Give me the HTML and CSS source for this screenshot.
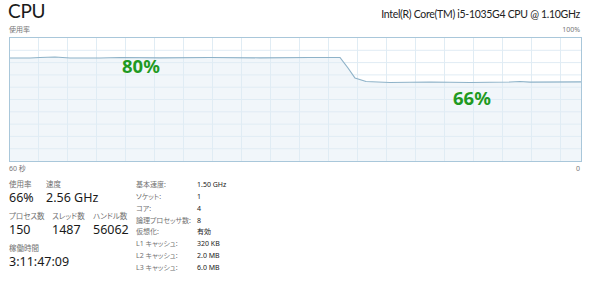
FILE: index.html
```html
<!DOCTYPE html>
<html lang="ja">
<head>
<meta charset="utf-8">
<link rel="stylesheet" href="styles.css">
</head>
<body>
<div class="page">
  <div class="header">
    <div class="title">CPU</div>
    <div class="model">Intel(R) Core(TM) i5-1035G4 CPU @ 1.10GHz</div>
  </div>
  <div class="axis-row">
    <span>使用率</span>
    <span>100%</span>
  </div>
  <div class="chart">
    <svg class="chart-svg" width="571" height="123" viewBox="0 0 571 123">
      <path class="area" d="M0 20 L20 20 L30 19.5 L45 19 L60 20 L90 20 L110 19.5 L150 19.8 L200 19.5 L250 19.8 L300 19.5 L330 19.5 L338 30 L345 40 L356 43.5 L380 44.5 L420 44 L460 44.5 L500 44 L510 43.5 L520 44.2 L571 43.8 L571 123 L0 123 Z"/>
      <g class="grid">
        <line x1="0" y1="12.3" x2="571" y2="12.3"/>
        <line x1="0" y1="24.6" x2="571" y2="24.6"/>
        <line x1="0" y1="36.9" x2="571" y2="36.9"/>
        <line x1="0" y1="49.2" x2="571" y2="49.2"/>
        <line x1="0" y1="61.5" x2="571" y2="61.5"/>
        <line x1="0" y1="73.8" x2="571" y2="73.8"/>
        <line x1="0" y1="86.1" x2="571" y2="86.1"/>
        <line x1="0" y1="98.4" x2="571" y2="98.4"/>
        <line x1="0" y1="110.7" x2="571" y2="110.7"/>
        <line x1="28.5" y1="0" x2="28.5" y2="123"/>
        <line x1="57.5" y1="0" x2="57.5" y2="123"/>
        <line x1="86.5" y1="0" x2="86.5" y2="123"/>
        <line x1="115.5" y1="0" x2="115.5" y2="123"/>
        <line x1="144.5" y1="0" x2="144.5" y2="123"/>
        <line x1="173.5" y1="0" x2="173.5" y2="123"/>
        <line x1="202.5" y1="0" x2="202.5" y2="123"/>
        <line x1="231.5" y1="0" x2="231.5" y2="123"/>
        <line x1="260.5" y1="0" x2="260.5" y2="123"/>
        <line x1="289.5" y1="0" x2="289.5" y2="123"/>
        <line x1="318.5" y1="0" x2="318.5" y2="123"/>
        <line x1="347.5" y1="0" x2="347.5" y2="123"/>
        <line x1="376.5" y1="0" x2="376.5" y2="123"/>
        <line x1="405.5" y1="0" x2="405.5" y2="123"/>
        <line x1="434.5" y1="0" x2="434.5" y2="123"/>
        <line x1="463.5" y1="0" x2="463.5" y2="123"/>
        <line x1="492.5" y1="0" x2="492.5" y2="123"/>
        <line x1="521.5" y1="0" x2="521.5" y2="123"/>
        <line x1="550.5" y1="0" x2="550.5" y2="123"/>
      </g>
      <path class="line" d="M0 20 L20 20 L30 19.5 L45 19 L60 20 L90 20 L110 19.5 L150 19.8 L200 19.5 L250 19.8 L300 19.5 L330 19.5 L338 30 L345 40 L356 43.5 L380 44.5 L420 44 L460 44.5 L500 44 L510 43.5 L520 44.2 L571 43.8"/>
    </svg>
    <span class="callout callout-high">80%</span>
    <span class="callout callout-low">66%</span>
  </div>
  <div class="axis-row axis-bottom">
    <span>60 秒</span>
    <span>0</span>
  </div>
  <div class="stats">
    <div class="stats-left">
      <div class="stat-row">
        <div class="stat stat-usage">
          <div class="stat-label">使用率</div>
          <div class="stat-value">66%</div>
        </div>
        <div class="stat">
          <div class="stat-label">速度</div>
          <div class="stat-value">2.56 GHz</div>
        </div>
      </div>
      <div class="stat-row">
        <div class="stat stat-proc">
          <div class="stat-label">プロセス数</div>
          <div class="stat-value">150</div>
        </div>
        <div class="stat stat-thread">
          <div class="stat-label">スレッド数</div>
          <div class="stat-value">1487</div>
        </div>
        <div class="stat">
          <div class="stat-label">ハンドル数</div>
          <div class="stat-value">56062</div>
        </div>
      </div>
      <div class="stat-row">
        <div class="stat">
          <div class="stat-label">稼働時間</div>
          <div class="stat-value">3:11:47:09</div>
        </div>
      </div>
    </div>
    <dl class="specs">
      <dt>基本速度:</dt><dd>1.50 GHz</dd>
      <dt>ソケット:</dt><dd>1</dd>
      <dt>コア:</dt><dd>4</dd>
      <dt>論理プロセッサ数:</dt><dd>8</dd>
      <dt>仮想化:</dt><dd>有効</dd>
      <dt>L1 キャッシュ:</dt><dd>320 KB</dd>
      <dt>L2 キャッシュ:</dt><dd>2.0 MB</dd>
      <dt>L3 キャッシュ:</dt><dd>6.0 MB</dd>
    </dl>
  </div>
</div>
</body>
</html>
```

FILE: styles.css
```css
* { box-sizing: border-box; }
html, body {
  margin: 0;
  padding: 0;
  background: #ffffff;
}
body {
  font-family: "Noto Sans", "Noto Sans CJK JP", sans-serif;
  color: #1a1a1a;
  width: 589px;
  height: 284px;
  overflow: hidden;
  font-feature-settings: "palt";
}
.page {
  padding: 0 9px 0 8px;
}
.header {
  display: flex;
  justify-content: space-between;
  align-items: baseline;
  height: 25px;
}
.title {
  font-family: "Lato", "Noto Sans", sans-serif;
  font-size: 19px;
  line-height: 22px;
  font-weight: 400;
  letter-spacing: -0.3px;
}
.model {
  font-family: "Lato", "Noto Sans", sans-serif;
  font-size: 10.5px;
  line-height: 14px;
  letter-spacing: -0.3px;
  color: #222;
}
.axis-row {
  display: flex;
  justify-content: space-between;
  height: 10px;
  line-height: 10px;
  font-size: 7px;
  color: #777;
  padding-left: 1px;
}
.chart {
  position: relative;
  margin: 2px 0 0 1px;
  width: 573px;
  height: 125px;
  border: 1px solid #a9c7da;
  background: #ffffff;
}
.chart-svg {
  display: block;
}
.grid line {
  stroke: #e0ecf4;
  stroke-width: 1;
}
.area {
  fill: #f1f6fa;
}
.line {
  fill: none;
  stroke: #8eb2c8;
  stroke-width: 1.2;
}
.callout {
  position: absolute;
  font-size: 18.5px;
  line-height: 18px;
  font-weight: 700;
  color: #1f9a22;
}
.callout-high {
  left: 112px;
  top: 19px;
}
.callout-low {
  left: 443px;
  top: 51px;
}
.axis-bottom {
  margin-top: 2px;
}
.stats {
  display: flex;
  margin-top: 5px;
  padding-left: 1px;
}
.stats-left {
  width: 127px;
  display: flex;
  flex-direction: column;
}
.stat-row {
  display: flex;
  margin-bottom: 4px;
}
.stat-usage { width: 37px; }
.stat-proc { width: 43px; }
.stat-thread { width: 41px; }
.stat-label {
  font-size: 7.5px;
  line-height: 10px;
  color: #707070;
  white-space: nowrap;
}
.stat-value {
  font-size: 12.5px;
  line-height: 18px;
  color: #1a1a1a;
  white-space: nowrap;
}
.specs {
  margin: 0;
  display: grid;
  grid-template-columns: 61px auto;
  grid-auto-rows: 11.86px;
  font-size: 7px;
  line-height: 11.86px;
}
.specs dt {
  color: #707070;
  white-space: nowrap;
}
.specs dd {
  margin: 0;
  color: #1a1a1a;
}
```
